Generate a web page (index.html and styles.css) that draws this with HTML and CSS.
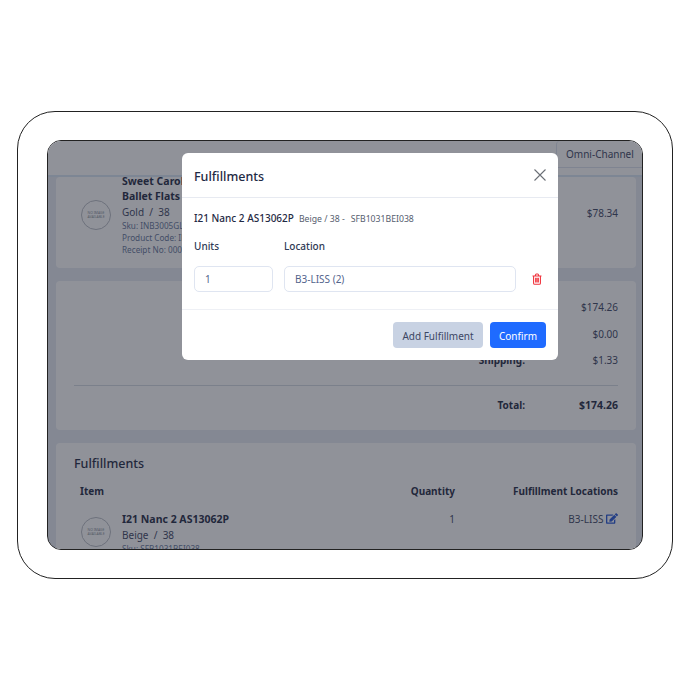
FILE: index.html
```html
<!DOCTYPE html>
<html>
    <head>
        <meta charset="utf-8">
        <title>Fulfillments</title>
        <link rel="stylesheet" href="styles.css">
    </head>
    <body>
        <div class="device">
            <div class="screen">
                <div class="page">
                    <div class="topbar">
                        <div class="tab">Omni-Channel</div>
                    </div>
                    <div class="content">
                        <section class="card item-card">
                            <div class="no-image"><span>NO IMAGE AVAILABLE</span></div>
                            <div class="item-info">
                                <div class="item-name">Sweet Carolyn<br>Ballet Flats</div>
                                <div class="item-variant">Gold &nbsp;/&nbsp; 38</div>
                                <div class="item-meta">Sku: INB3005GLD038</div>
                                <div class="item-meta">Product Code: INB3005</div>
                                <div class="item-meta">Receipt No: 000321</div>
                            </div>
                            <div class="item-price">$78.34</div>
                        </section>
                        <section class="card totals-card">
                            <div class="totals-row"><span class="totals-label">Subtotal:</span><span class="totals-value">$174.26</span></div>
                            <div class="totals-row"><span class="totals-label">Tax:</span><span class="totals-value">$0.00</span></div>
                            <div class="totals-row"><span class="totals-label">Shipping:</span><span class="totals-value">$1.33</span></div>
                            <hr class="totals-line">
                            <div class="totals-row total"><span class="totals-label">Total:</span><span class="totals-value">$174.26</span></div>
                        </section>
                        <section class="card fulfil-card">
                            <h2 class="fulfil-title">Fulfillments</h2>
                            <div class="fulfil-head">
                                <span class="col-item">Item</span>
                                <span class="col-qty">Quantity</span>
                                <span class="col-loc">Fulfillment Locations</span>
                            </div>
                            <div class="fulfil-row">
                                <div class="no-image"><span>NO IMAGE AVAILABLE</span></div>
                                <div class="fulfil-info">
                                    <div class="item-name">I21 Nanc 2 AS13062P</div>
                                    <div class="item-variant">Beige &nbsp;/&nbsp; 38</div>
                                    <div class="item-meta">Sku: SFB1031BEI038</div>
                                </div>
                                <div class="col-qty qty-value">1</div>
                                <div class="col-loc loc-value">B3-LISS
                                    <svg class="edit-icon" viewBox="0 0 576 512"><path d="M402.6 83.2l90.2 90.2c3.8 3.8 3.8 10 0 13.8L274.4 405.6l-92.8 10.3c-12.4 1.4-22.9-9.1-21.5-21.5l10.3-92.8L388.8 83.2c3.8-3.8 10-3.8 13.8 0zm162-22.9l-48.8-48.8c-15.2-15.2-39.9-15.2-55.2 0l-35.4 35.4c-3.8 3.8-3.8 10 0 13.8l90.2 90.2c3.8 3.8 10 3.8 13.8 0l35.4-35.4c15.2-15.3 15.2-40 0-55.2zM384 346.2V448H64V128h229.8c3.2 0 6.2-1.3 8.5-3.5l40-40c7.6-7.6 2.2-20.5-8.5-20.5H48C21.5 64 0 85.5 0 112v352c0 26.5 21.5 48 48 48h352c26.5 0 48-21.5 48-48V306.2c0-10.7-12.9-16-20.5-8.5l-40 40c-2.2 2.3-3.5 5.3-3.5 8.5z"/></svg>
                                </div>
                            </div>
                        </section>
                    </div>
                </div>

                <div class="overlay">
                    <div class="modal">
                        <div class="modal-header">
                            <h3>Fulfillments</h3>
                            <svg class="close-icon" viewBox="0 0 12 12"><path d="M0.5 0.5L11.5 11.5M11.5 0.5L0.5 11.5"/></svg>
                        </div>
                        <div class="modal-body">
                            <div class="product-line">
                                <span class="product-name">I21 Nanc 2 AS13062P</span>
                                <span class="product-sub">Beige / 38 -</span>
                                <span class="product-sub sku">SFB1031BEI038</span>
                            </div>
                            <div class="form-grid">
                                <label>Units</label>
                                <label>Location</label>
                                <span></span>
                                <div class="field">1</div>
                                <div class="field">B3-LISS (2)</div>
                                <svg class="trash-icon" viewBox="0 0 12 14"><path d="M1.9 3.3V12c0 .8.5 1.3 1.3 1.3h5.6c.8 0 1.3-.5 1.3-1.3V3.3M.6 3.3h10.8M3.8 3.2l.7-1.8c.1-.3.4-.5.7-.5h1.6c.3 0 .6.2.7.5l.7 1.8M4.4 5.4v5.7M6 5.4v5.7M7.6 5.4v5.7"/></svg>
                            </div>
                        </div>
                        <div class="modal-footer">
                            <button class="btn btn-light">Add Fulfillment</button>
                            <button class="btn btn-primary">Confirm</button>
                        </div>
                    </div>
                </div>
            </div>
        </div>
    </body>
</html>
```

FILE: styles.css
```css
*{
    box-sizing: border-box;
}
body{
    margin: 0;
    width: 690px;
    height: 690px;
    display: flex;
    align-items: center;
    justify-content: center;
    background-color: white;
    font-family: "Noto Sans", sans-serif;
    color: #1f2a44;
}
.device{
    width: 656px;
    height: 468px;
    padding: 28px 29px;
    background-color: white;
    border: 1px solid #222;
    border-radius: 38px;
}
.screen{
    position: relative;
    height: 100%;
    overflow: hidden;
    background-color: #e6ebf3;
    border: 1px solid #222;
    border-radius: 14px;
}

/* page behind the dialog */
.page{
    display: flex;
    flex-direction: column;
}
.topbar{
    height: 36px;
    display: flex;
    justify-content: flex-end;
    align-items: flex-start;
    background-color: white;
    border-bottom: 2px solid #d8e6f5;
}
.tab{
    width: 86px;
    height: 27px;
    line-height: 27px;
    padding-left: 9px;
    font-size: 10px;
    color: #3c4663;
    border-left: 1px solid #dde3ee;
    border-bottom: 1px solid #dde3ee;
    border-radius: 4px 0 0 0;
}
.content{
    display: flex;
    flex-direction: column;
    gap: 13px;
    padding: 0 6px 0 8px;
}
.card{
    background-color: white;
    border-radius: 4px;
}
.item-card{
    height: 91px;
    display: flex;
    padding: 0 18px 0 25px;
}
.no-image{
    width: 30px;
    height: 30px;
    flex-shrink: 0;
    display: flex;
    align-items: center;
    justify-content: center;
    border: 1px solid #b8bcc4;
    border-radius: 50%;
    text-align: center;
}
.no-image span{
    width: 21px;
    font-size: 3.4px;
    line-height: 4px;
    color: #8a8f99;
}
.item-card .no-image{
    margin-top: 23px;
}
.item-info{
    margin: -3px 0 0 11px;
    flex-grow: 1;
}
.item-name{
    font-size: 10.5px;
    line-height: 15px;
    font-weight: 700;
}
.item-variant{
    font-size: 10px;
    line-height: 16px;
    color: #3c4663;
}
.item-meta{
    font-size: 8.2px;
    line-height: 12px;
    color: #65769a;
}
.item-price{
    padding-top: 29px;
    font-size: 10px;
    color: #3c4663;
}
.totals-card{
    height: 149px;
    padding: 13px 18px 0;
}
.totals-row{
    display: flex;
    justify-content: flex-end;
    height: 26.5px;
    line-height: 26px;
    font-size: 10px;
    color: #3c4663;
}
.totals-label{
    font-weight: 700;
    color: #1f2a44;
}
.totals-value{
    width: 93px;
    text-align: right;
}
.totals-line{
    margin: 11px 0 6px;
    border: 0;
    border-top: 1px solid #d5dae3;
}
.total .totals-value{
    font-size: 10.5px;
    font-weight: 700;
    color: #1f2a44;
}
.fulfil-card{
    height: 130px;
    padding: 12px 18px 0;
}
.fulfil-title{
    margin: 0;
    font-size: 12.5px;
    line-height: 17px;
    font-weight: 500;
}
.fulfil-head{
    display: flex;
    margin-top: 12px;
    padding-left: 6px;
    font-size: 10px;
    font-weight: 700;
}
.col-item{
    flex-grow: 1;
}
.col-qty{
    width: 70px;
    text-align: right;
}
.col-loc{
    width: 163px;
    text-align: right;
}
.fulfil-row{
    display: flex;
    margin-top: 14px;
    padding-left: 7px;
}
.fulfil-row .no-image{
    margin-top: 5px;
}
.fulfil-info{
    flex-grow: 1;
    margin-left: 11px;
}
.qty-value,.loc-value{
    font-size: 10px;
    line-height: 15px;
    color: #3c4663;
}
.edit-icon{
    width: 12px;
    height: 11px;
    fill: #2456d6;
    vertical-align: -1px;
}

/* dialog */
.overlay{
    position: absolute;
    top: 0;
    left: 0;
    right: 0;
    bottom: 0;
    display: flex;
    align-items: flex-start;
    padding: 12px 0 0 134px;
    background-color: rgba(33,37,51,0.5);
}
.modal{
    width: 376px;
    height: 207px;
    background-color: white;
    border-radius: 6px;
    display: flex;
    flex-direction: column;
}
.modal-header{
    height: 45px;
    display: flex;
    justify-content: space-between;
    align-items: center;
    padding: 2px 12px 0;
    border-bottom: 1px solid #e7eaf1;
}
.modal-header h3{
    margin: 0;
    font-size: 12.5px;
    font-weight: 500;
    color: #1f2a44;
}
.close-icon{
    width: 12px;
    height: 12px;
    margin-top: -3px;
    stroke: #6b6f76;
    stroke-width: 1.1;
    fill: none;
}
.modal-body{
    flex-grow: 1;
    padding: 13px 12px 0;
    border-bottom: 1px solid #eef0f5;
}
.product-line{
    display: flex;
    align-items: baseline;
    gap: 5px;
    line-height: 14px;
}
.product-name{
    font-size: 10px;
    font-weight: 500;
}
.product-sub{
    font-size: 8.7px;
    color: #555d6e;
}
.sku{
    margin-left: 1px;
}
.form-grid{
    display: grid;
    grid-template-columns: 79px 232px 21px;
    grid-template-rows: 34px 26px;
    column-gap: 11px;
    margin-top: 6px;
}
.form-grid label{
    font-size: 10px;
    font-weight: 500;
    line-height: 28px;
    align-self: start;
    color: #2f3a55;
}
.field{
    border: 1px solid #dfe5f1;
    border-radius: 5px;
    padding-left: 10px;
    line-height: 24px;
    font-size: 10px;
    color: #53648c;
}
.trash-icon{
    width: 10px;
    height: 12px;
    margin-right: 1px;
    align-self: center;
    justify-self: center;
    stroke: #f0323c;
    stroke-width: 1.3;
    fill: none;
}
.modal-footer{
    height: 50px;
    display: flex;
    justify-content: flex-end;
    gap: 7px;
    padding: 12px 12px 0;
}
.btn{
    height: 26px;
    border: 0;
    border-radius: 4px;
    padding: 1px 0 0;
    font-family: "Noto Sans", sans-serif;
    font-size: 10px;
}
.btn-light{
    width: 90px;
    background-color: #c8d2e3;
    color: #3c4663;
}
.btn-primary{
    width: 56px;
    background-color: #1f6bff;
    color: white;
}
```
